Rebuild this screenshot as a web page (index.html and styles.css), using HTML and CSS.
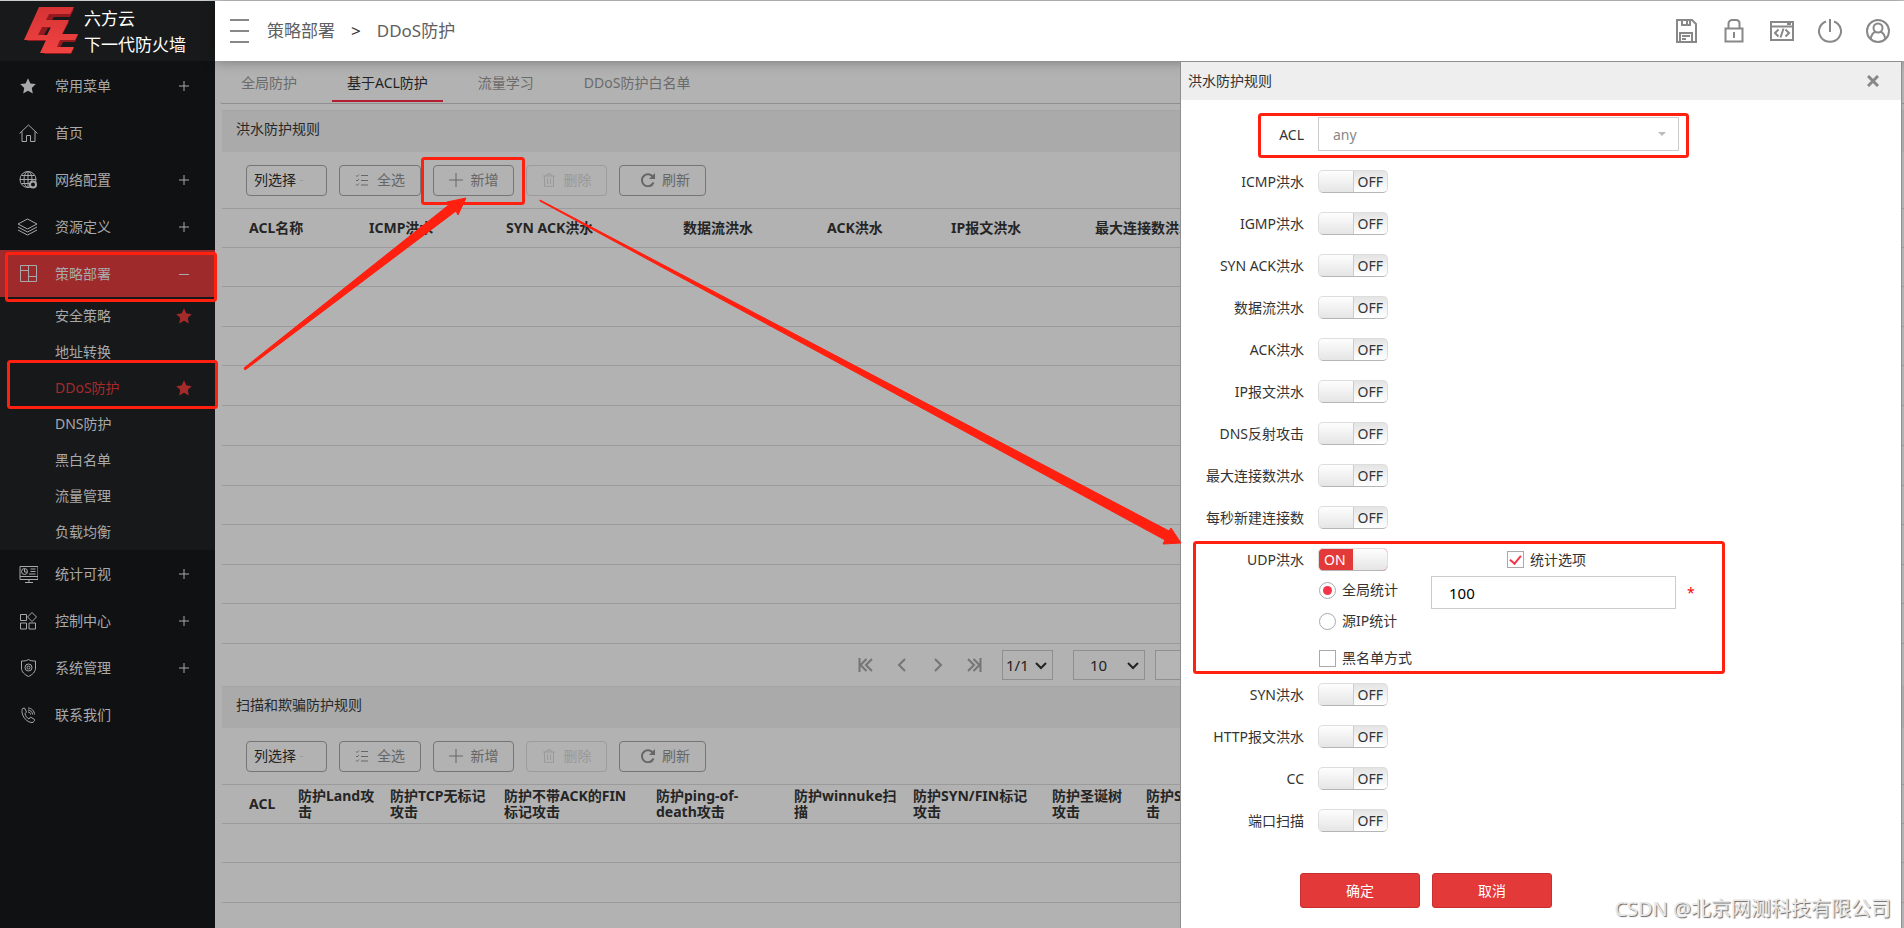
FILE: index.html
```html
<!DOCTYPE html>
<html lang="zh-CN">
<head>
<meta charset="utf-8">
<title>六方云 下一代防火墙</title>
<link rel="stylesheet" href="styles.css">
</head>
<body>
<svg class="defs" aria-hidden="true">
  <defs>
    <linearGradient id="logoRed" x1="0" y1="0" x2="0" y2="1"><stop offset="0" stop-color="#d63335"/><stop offset="1" stop-color="#f04341"/></linearGradient>
    <symbol id="i-star" viewBox="0 0 20 20"><path fill="currentColor" stroke="none" d="M10 2.2l2.4 5.2 5.4.7-4 3.9 1 5.6-4.8-2.8-4.8 2.8 1-5.6-4-3.9 5.4-.7z"/></symbol>
    <symbol id="i-plus" viewBox="0 0 10 10"><path d="M5 0v10M0 5h10"/></symbol>
    <symbol id="i-minus" viewBox="0 0 10 10"><path d="M0 5.500h10"/></symbol>
    <symbol id="i-check-list" viewBox="0 0 14 14"><path d="M1 2.500l1 1 2-2M6 2.500h7M1 7l1 1 2-2M6 7.500h7M1 11.500l1 1 2-2M6 12h7"/></symbol>
    <symbol id="i-add" viewBox="0 0 14 14"><path d="M7 0v14M0 7h14"/></symbol>
    <symbol id="i-trash" viewBox="0 0 14 14"><path d="M1 3h12M5 3V1h4v2M2.500 3v10.300h9V3M5.500 5.500v5.500M8.500 5.500v5.500"/></symbol>
    <symbol id="i-refresh" viewBox="0 0 14 14"><path stroke-width="2" d="M12.500 9.500a6 6 0 1 1-.5-5.500"/><path fill="currentColor" stroke="none" d="M14 0v6H8z"/></symbol>
  </defs>
</svg>

<div class="app">
  <aside class="sidebar">
    <div class="brand">
      <svg class="brand-logo" viewBox="0 0 56 48">
        <path fill="#951a20" fill-rule="evenodd" transform="translate(3 1)" d="M16 1h32l-4 8H28l-3 5h18l-7 13h16l-3 7H37l-3 6h14l-3 6H18l6-13H1zM22 20h7l-4 7h-7z"/>
        <path fill="url(#logoRed)" fill-rule="evenodd" d="M16 0h35l-4 7H26l-3 6h23l-7 14h16l-3 6H37l-3 7h17l-3 6H17l6-13H1zM19 20h9l-4 8h-9z"/>
      </svg>
      <div class="brand-name"><span>六方云</span><span>下一代防火墙</span></div>
    </div>
    <nav class="menu">
      <a class="item" href="#"><svg class="icon"><use href="#i-star"/></svg><span>常用菜单</span><svg class="sign"><use href="#i-plus"/></svg></a>
      <a class="item" href="#"><svg class="icon" viewBox="0 0 20 20"><path d="M1.500 10.500L10.500 2l9 8.500M4 8.500v10h4.500v-6h4v6H17v-10"/></svg><span>首页</span></a>
      <a class="item" href="#"><svg class="icon" viewBox="0 0 20 20"><circle cx="10" cy="9.500" r="8"/><ellipse cx="10" cy="9.500" rx="4" ry="8"/><path d="M10 1.500v16M2 9.500h16M3.500 5.500h13M3.500 13.500h9"/><circle cx="15" cy="14.500" r="3" fill="#101112" stroke-width="2"/></svg><span>网络配置</span><svg class="sign"><use href="#i-plus"/></svg></a>
      <a class="item" href="#"><svg class="icon" viewBox="0 0 20 20"><path d="M9.500 2l9.500 5-9.500 5L0 7zM0 10l9.500 5 9.500-5M0 13l9.500 5 9.500-5"/></svg><span>资源定义</span><svg class="sign"><use href="#i-plus"/></svg></a>
      <a class="item item-active" href="#"><svg class="icon" viewBox="0 0 20 20"><path d="M2.500 1.500h16v16h-16zM10.500 1.500v16M2.500 6.500h8M10.500 12.500h8"/></svg><span>策略部署</span><svg class="sign"><use href="#i-minus"/></svg></a>
      <div class="submenu">
        <a class="sub" href="#"><span>安全策略</span><svg class="fav"><use href="#i-star"/></svg></a>
        <a class="sub" href="#"><span>地址转换</span></a>
        <a class="sub sub-active" href="#"><span>DDoS防护</span><svg class="fav"><use href="#i-star"/></svg></a>
        <a class="sub" href="#"><span>DNS防护</span></a>
        <a class="sub" href="#"><span>黑白名单</span></a>
        <a class="sub" href="#"><span>流量管理</span></a>
        <a class="sub" href="#"><span>负载均衡</span></a>
      </div>
      <a class="item" href="#"><svg class="icon" viewBox="0 0 20 20"><path d="M2 2.500h18v13H2zM2 12.500h18M7 18.500h8M11 15.500v3M12.500 5h5M12.500 7.500h5M11 10h6.500"/><circle cx="6.500" cy="7.500" r="3"/><path d="M6.500 5v3H9"/></svg><span>统计可视</span><svg class="sign"><use href="#i-plus"/></svg></a>
      <a class="item" href="#"><svg class="icon" viewBox="0 0 20 20"><path d="M2.500 3.500h6v6h-6zM2.500 12h6v6h-6zM11 12h6.500v6H11zM14 1.500l4.500 4.500-4.500 4.500L9.500 6z"/></svg><span>控制中心</span><svg class="sign"><use href="#i-plus"/></svg></a>
      <a class="item" href="#"><svg class="icon" viewBox="0 0 20 20"><path d="M10.500 1.500c2 1.500 4.500 1.500 7 1.500v7c0 4-3 6.500-7 8.500-4-2-7-4.500-7-8.500V3c2.500 0 5 0 7-1.500z"/><circle cx="10.500" cy="9.500" r="3.500"/><circle cx="10.500" cy="9.500" r="1.500"/></svg><span>系统管理</span><svg class="sign"><use href="#i-plus"/></svg></a>
      <a class="item" href="#"><svg class="icon" viewBox="0 0 20 20"><path d="M4.500 3.500l2-.5 2 4-1.500 1.500c.5 2.500 2 4.500 4 5.500L12.500 12l4 2.500c.5 1-1 3-2.500 3-5 0-10-6-10-11 0-1.500 0-2.500.5-3zM10 7c1.500 0 2.500 1 2.500 2.500M10 5c2.500 0 4.500 2 4.500 4.500M10 3c3.500 0 6.500 3 6.500 6.500"/></svg><span>联系我们</span></a>
    </nav>
  </aside>

  <div class="page">
    <header class="topbar">
      <button class="burger" type="button" aria-label="菜单"><i></i><i></i><i></i></button>
      <div class="crumbs"><span>策略部署</span><b>&gt;</b><span>DDoS防护</span></div>
      <div class="tools">
        <button type="button" aria-label="保存"><svg viewBox="0 0 24 24"><path d="M3 1h15l4 4v18H3zM8 1v5h8V1M13 2v3M6 23v-9h12v9M8 17h8M8 20h4"/></svg></button>
        <button type="button" aria-label="锁定"><svg viewBox="0 0 24 24"><path d="M3.500 9.500h17v13h-17zM6.500 9.500V4.500c0-2 2-3.500 3.500-3.500h4c2 0 3.500 1.500 3.500 3.500v5M12 13v6"/></svg></button>
        <button type="button" aria-label="控制台"><svg viewBox="0 0 24 24"><path d="M1 3h22v18H1zM1 7.500h22M17 5h4M8.500 10.500L5 14l3.500 3.500M15.500 10.500L19 14l-3.500 3.500M13.500 9.500l-3 9"/></svg></button>
        <button type="button" aria-label="退出"><svg viewBox="0 0 24 24"><path d="M8 2.500a11 10.500 0 1 0 8 0M12 0v13"/></svg></button>
        <button type="button" aria-label="用户"><svg viewBox="0 0 24 24"><circle cx="12" cy="12" r="11"/><circle cx="12" cy="9" r="4.500"/><path d="M5 20c0-4 2.500-7 5-7.500M19 20c0-4-2.500-7-5-7.500"/></svg></button>
      </div>
    </header>

    <main class="content">
      <nav class="tabs">
        <a href="#">全局防护</a>
        <a class="current" href="#">基于ACL防护</a>
        <a href="#">流量学习</a>
        <a href="#">DDoS防护白名单</a>
      </nav>

      <section class="panel">
        <h2>洪水防护规则</h2>
        <div class="toolbar">
          <button class="columns" type="button">列选择<i></i></button>
          <button type="button"><svg><use href="#i-check-list"/></svg>全选</button>
          <button type="button"><svg><use href="#i-add"/></svg>新增</button>
          <button type="button" disabled><svg><use href="#i-trash"/></svg>删除</button>
          <button class="refresh" type="button"><svg><use href="#i-refresh"/></svg>刷新</button>
        </div>
        <table class="flood">
          <colgroup><col><col><col><col><col><col><col></colgroup>
          <thead><tr><th>ACL名称</th><th>ICMP洪水</th><th>SYN ACK洪水</th><th>数据流洪水</th><th>ACK洪水</th><th>IP报文洪水</th><th>最大连接数洪水</th></tr></thead>
          <tbody>
            <tr><td colspan="7"></td></tr><tr><td colspan="7"></td></tr><tr><td colspan="7"></td></tr><tr><td colspan="7"></td></tr><tr><td colspan="7"></td></tr>
            <tr><td colspan="7"></td></tr><tr><td colspan="7"></td></tr><tr><td colspan="7"></td></tr><tr><td colspan="7"></td></tr><tr><td colspan="7"></td></tr>
          </tbody>
        </table>
        <div class="pager">
          <button type="button" aria-label="首页"><svg viewBox="0 0 16 14"><path d="M1.500 0v14M8.500 1l-6 6 6 6M14 1L8 7l6 6"/></svg></button>
          <button type="button" aria-label="上一页"><svg viewBox="0 0 16 14"><path d="M11 1L5 7l6 6"/></svg></button>
          <button type="button" aria-label="下一页"><svg viewBox="0 0 16 14"><path d="M5 1l6 6-6 6"/></svg></button>
          <button type="button" aria-label="末页"><svg viewBox="0 0 16 14"><path d="M14.500 0v14M7.500 1l6 6-6 6M2 1l6 6-6 6"/></svg></button>
          <span class="pick pick-page"><select aria-label="页码"><option>1/1</option></select><svg viewBox="0 0 12 8"><path d="M1 1l5 5 5-5"/></svg></span>
          <span class="pick pick-size"><select aria-label="每页条数"><option>10</option></select><svg viewBox="0 0 12 8"><path d="M1 1l5 5 5-5"/></svg></span>
          <input type="text" aria-label="跳转">
        </div>
      </section>

      <section class="panel">
        <h2>扫描和欺骗防护规则</h2>
        <div class="toolbar">
          <button class="columns" type="button">列选择<i></i></button>
          <button type="button"><svg><use href="#i-check-list"/></svg>全选</button>
          <button type="button"><svg><use href="#i-add"/></svg>新增</button>
          <button type="button" disabled><svg><use href="#i-trash"/></svg>删除</button>
          <button class="refresh" type="button"><svg><use href="#i-refresh"/></svg>刷新</button>
        </div>
        <table class="scan">
          <colgroup><col><col><col><col><col><col><col><col><col></colgroup>
          <thead><tr><th>ACL</th><th>防护Land攻<br>击</th><th>防护TCP无标记<br>攻击</th><th>防护不带ACK的FIN<br>标记攻击</th><th>防护ping-of-<br>death攻击</th><th>防护winnuke扫<br>描</th><th>防护SYN/FIN标记<br>攻击</th><th>防护圣诞树<br>攻击</th><th>防护Smurf攻<br>击</th></tr></thead>
          <tbody><tr><td colspan="9"></td></tr><tr><td colspan="9"></td></tr><tr><td colspan="9"></td></tr></tbody>
        </table>
      </section>
    </main>
  </div>
</div>

<aside class="drawer">
  <header><h2>洪水防护规则</h2><button type="button" aria-label="关闭"><svg viewBox="0 0 12 12"><path d="M1 1l10 10M11 1L1 11"/></svg></button></header>
  <form>
    <div class="row"><label for="acl">ACL</label><span class="combo"><select id="acl"><option>any</option></select></span></div>
    <div class="row"><label for="f1">ICMP洪水</label><span class="switch"><input id="f1" type="checkbox"><span>OFF</span></span></div>
    <div class="row"><label for="f2">IGMP洪水</label><span class="switch"><input id="f2" type="checkbox"><span>OFF</span></span></div>
    <div class="row"><label for="f3">SYN ACK洪水</label><span class="switch"><input id="f3" type="checkbox"><span>OFF</span></span></div>
    <div class="row"><label for="f4">数据流洪水</label><span class="switch"><input id="f4" type="checkbox"><span>OFF</span></span></div>
    <div class="row"><label for="f5">ACK洪水</label><span class="switch"><input id="f5" type="checkbox"><span>OFF</span></span></div>
    <div class="row"><label for="f6">IP报文洪水</label><span class="switch"><input id="f6" type="checkbox"><span>OFF</span></span></div>
    <div class="row"><label for="f7">DNS反射攻击</label><span class="switch"><input id="f7" type="checkbox"><span>OFF</span></span></div>
    <div class="row"><label for="f8">最大连接数洪水</label><span class="switch"><input id="f8" type="checkbox"><span>OFF</span></span></div>
    <div class="row"><label for="f9">每秒新建连接数</label><span class="switch"><input id="f9" type="checkbox"><span>OFF</span></span></div>
    <div class="row"><label for="f10">UDP洪水</label><span class="switch switch-on"><input id="f10" type="checkbox" checked><span>ON</span></span><label class="option stats"><input type="checkbox" checked>统计选项</label></div>
    <div class="suboptions">
      <label class="option ruled"><input type="radio" name="scope" checked>全局统计</label>
      <div class="limit"><input type="text" value="100" aria-label="全局统计阈值"><em>*</em></div>
      <label class="option"><input type="radio" name="scope">源IP统计</label>
      <label class="option blacklist"><input type="checkbox">黑名单方式</label>
    </div>
    <div class="row"><label for="f11">SYN洪水</label><span class="switch"><input id="f11" type="checkbox"><span>OFF</span></span></div>
    <div class="row"><label for="f12">HTTP报文洪水</label><span class="switch"><input id="f12" type="checkbox"><span>OFF</span></span></div>
    <div class="row"><label for="f13">CC</label><span class="switch"><input id="f13" type="checkbox"><span>OFF</span></span></div>
    <div class="row"><label for="f14">端口扫描</label><span class="switch"><input id="f14" type="checkbox"><span>OFF</span></span></div>
    <div class="actions"><button type="button">确定</button><button type="button">取消</button></div>
  </form>
</aside>

<svg class="marks" aria-hidden="true">
  <g class="frames">
    <rect x="6.500" y="253.500" width="209" height="47" rx="2"/>
    <rect x="8.500" y="361.500" width="208" height="46" rx="2"/>
    <rect x="422.500" y="158.500" width="101" height="45" rx="2"/>
    <rect x="1259.500" y="114.500" width="428" height="42" rx="2"/>
    <rect x="1194.500" y="542.500" width="529" height="130" rx="2"/>
  </g>
  <path class="arrow" d="M244 368L450 204l-3-2 19-4-8 17-2-4L245 370z"/>
  <path class="arrow" d="M540 200L1169 531l2-3 10 15-18 1 2-4L540 201z"/>
</svg>
<div class="credit">CSDN @北京网测科技有限公司</div>
</body>
</html>
```

FILE: styles.css
```css
* { box-sizing: border-box; }
body {
  margin: 0;
  height: 100vh;
  overflow: hidden;
  position: relative;
  font: 14px/20px "Noto Sans", "Noto Sans CJK SC", sans-serif;
  color: #333;
  background: #b2b2b2;
}
a { color: inherit; text-decoration: none; }
button, input, select { font: inherit; color: inherit; margin: 0; }
button { padding: 0; border: 0; background: none; }
h2 { margin: 0; font-size: 14px; font-weight: 400; }
svg { display: block; fill: none; stroke: currentColor; }
.defs { position: absolute; width: 0; height: 0; }

.app { display: flex; height: 100%; border-top: 1px solid #ccc; }

/* sidebar */
.sidebar { flex: none; width: 215px; background: #101112; color: #a8a9aa; }
.brand { display: flex; gap: 5px; height: 60px; padding: 5px 0 0 23px; background: #18191a; }
.brand-logo { width: 56px; height: 48px; margin-top: 1px; stroke: none; }
.brand-name { display: flex; flex-direction: column; color: #fff; font-size: 17px; line-height: 26px; }
.menu { padding-top: 1px; }
.item { display: flex; align-items: center; gap: 17px; height: 47px; padding: 0 26px 0 18px; }
.item span, .sub span { flex: 1; }
.icon { width: 20px; height: 20px; }
.sign { width: 10px; height: 10px; }
.item-active { background: #9e2a2b; }
.submenu { background: #17181a; padding-top: 1px; }
.sub { display: flex; align-items: center; height: 36px; padding: 0 21px 0 55px; }
.sub-active { color: #a52a2c; }
.fav { width: 20px; height: 20px; color: #a52a2c; }

/* top bar */
.page { flex: 1; min-width: 0; display: flex; flex-direction: column; }
.topbar { position: relative; flex: none; display: flex; align-items: center; height: 60px; padding: 0 14px 0 15px; background: #fff; box-shadow: 0 0 12px rgba(0, 0, 0, .35); }
.burger { display: flex; flex-direction: column; gap: 9px; width: 19px; }
.burger i { height: 2px; background: #888; }
.crumbs { display: flex; gap: 16px; margin-left: 18px; font-size: 17px; color: #606060; }
.crumbs b { font-weight: 400; color: #333; }
.tools { display: flex; gap: 24px; margin-left: auto; color: #888; }
.tools svg { width: 24px; height: 24px; stroke-width: 2; }

/* content */
.content { flex: 1; min-height: 0; overflow: hidden; padding-left: 4px; }
.tabs { display: flex; gap: 20px; height: 43px; padding-left: 6px; border-bottom: 1px solid #8f8f8f; border-left: 1px solid #b2b2b2; border-bottom-left-radius: 4px; color: #6b6b6b; }
.tabs a { height: 41px; padding: 12px 15px 0; line-height: 20px; }
.tabs .current { border-bottom: 2px solid #b01e30; color: #222; }
.panel { margin-left: 3px; }
.panel h2 { height: 42px; margin-top: 6px; padding: 8px 14px; border-top: 1px solid #a5a5a5; background: #aaa; color: #282828; }
.panel + .panel h2 { margin-top: 0; }
.toolbar { display: flex; align-items: center; gap: 12px; height: 56px; padding-left: 24px; }
.toolbar button { display: flex; align-items: center; justify-content: center; gap: 8px; width: 81px; height: 31px; border: 1px solid #757575; border-radius: 4px; color: #666; }
.toolbar button:nth-child(2) { width: 82px; }
.toolbar svg { width: 14px; height: 14px; }
.toolbar .columns { justify-content: flex-start; padding-left: 7px; gap: 4px; color: #222; }
.columns i { width: 3px; height: 1px; background: #999; }
.toolbar .refresh { width: 87px; padding-left: 6px; gap: 7px; }
.toolbar button:disabled { border-color: #9c9c9c; color: #999; }
table { width: 100%; border-collapse: collapse; table-layout: fixed; color: #252525; }
th { height: 39px; padding: 0; border-top: 1px solid #9b9b9b; border-bottom: 1px solid #9b9b9b; text-align: left; line-height: 16px; white-space: nowrap; }
td { height: 39px; padding: 0; border-bottom: 1px solid #9b9b9b; }
tr:nth-child(even) td, tr:nth-child(5n) td { height: 40px; }
th:first-child { padding-left: 27px; }
.flood col:nth-child(1) { width: 147px; }
.flood col:nth-child(2) { width: 137px; }
.flood col:nth-child(3) { width: 177px; }
.flood col:nth-child(4) { width: 144px; }
.flood col:nth-child(5) { width: 124px; }
.flood col:nth-child(6) { width: 144px; }
.scan col:nth-child(1) { width: 76px; }
.scan col:nth-child(2) { width: 92px; }
.scan col:nth-child(3) { width: 114px; }
.scan col:nth-child(4) { width: 152px; }
.scan col:nth-child(5) { width: 138px; }
.scan col:nth-child(6) { width: 119px; }
.scan col:nth-child(7) { width: 139px; }
.scan col:nth-child(8) { width: 94px; }
.pager { display: flex; align-items: center; height: 42px; padding-left: 636px; color: #757575; }
.pager button { margin-right: 20px; }
.pager button svg { width: 16px; height: 14px; stroke-width: 2; }
.pager input, .pick select { height: 30px; border: 1px solid #8f8f8f; border-radius: 0; background: none; }
.pager input { width: 60px; margin-left: 10px; background: #b5b5b5; }
.pick { position: relative; color: #222; font-size: 15px; }
.pick select { appearance: none; width: 100%; padding: 0 0 0 3px; }
.pick svg { position: absolute; right: 6px; top: 12px; width: 12px; height: 8px; stroke-width: 2; pointer-events: none; }
.pick-page { width: 51px; }
.pick-size { width: 72px; margin-left: 20px; }
.pick-size select { padding-left: 16px; }

/* drawer */
.drawer { position: absolute; top: 61px; right: 2px; bottom: 0; width: 722px; border: 1px solid #8f8f8f; border-bottom: 0; background: #fff; }
.drawer header { display: flex; align-items: center; justify-content: space-between; height: 38px; padding: 0 22px 0 7px; background: #eee; }
.drawer header svg { width: 12px; height: 12px; color: #888; stroke-width: 3; }
.drawer form { padding-top: 17px; }
.row { display: grid; grid-template-columns: 123px 70px auto; gap: 14px; align-items: center; margin-bottom: 19px; }
.row > label:first-child { text-align: right; line-height: 23px; white-space: nowrap; }
.combo { position: relative; grid-column: 2 / 4; width: 361px; }
.combo select { display: block; appearance: none; width: 100%; height: 34px; padding: 2px 14px 0; border: 1px solid #ccc; border-radius: 0; background: #fff; color: #888; }
.combo::after { content: ""; position: absolute; right: 13px; top: 15px; border: 4px solid transparent; border-top-color: #bbb; }
.switch { position: relative; display: block; height: 23px; border: 1px solid #ddd; border-bottom: 1px solid #b5b5b5; border-radius: 5px; background: linear-gradient(#e4e4e4, #fff); overflow: hidden; }
.switch input { position: absolute; inset: 0; width: 100%; height: 100%; appearance: none; }
.switch input::before { content: ""; position: absolute; left: 0; top: 0; width: 34px; height: 21px; border-right: 1px solid #ccc; background: linear-gradient(#fefefe, #e5e5e5); }
.switch span { display: block; padding: 1px 4px 0; text-align: right; pointer-events: none; }
.switch-on { background: #e33938; }
.switch-on input::before { left: 34px; border-right: 0; }
.switch-on span { text-align: left; color: #fff; padding-left: 5px; position: relative; }
.option { display: flex; align-items: center; gap: 6px; height: 24px; white-space: nowrap; }
.option input { appearance: none; display: grid; place-items: center; flex: none; width: 17px; height: 17px; border: 1px solid #aaa; background: #fff; }
.option input[type="checkbox"]:checked::after { content: ""; width: 5px; height: 9px; margin-bottom: 3px; border: solid #f5344a; border-width: 0 2px 2px 0; rotate: 40deg; }
.option input[type="radio"] { border-radius: 50%; }
.option input[type="radio"]:checked::after { content: ""; width: 9px; height: 9px; border-radius: 50%; background: #f5344a; }
.stats { margin-left: 105px; height: 23px; }
.suboptions { display: grid; grid-template-columns: 112px auto; grid-template-rows: 33px 24px 41px; margin: -14px 0 9px 138px; }
.suboptions .option { grid-column: 1; }
.ruled { height: 28px; }
.blacklist { align-self: center; padding-top: 9px; height: 33px; }
.limit { display: flex; gap: 11px; grid-column: 2; }
.limit input { width: 245px; height: 33px; padding: 0 17px; border: 1px solid #ccc; font-size: 15px; color: #000; }
.limit em { color: #f00; font-style: normal; line-height: 33px; }
.actions { display: flex; gap: 12px; padding: 22px 0 0 119px; }
.actions button { width: 120px; height: 35px; border: 1px solid #c62f2f; border-radius: 3px; background: #e33938; color: #fff; }

/* annotations */
.marks { position: absolute; inset: 0; width: 100%; height: 100%; pointer-events: none; }
.frames { stroke: #ff2010; stroke-width: 3; }
.arrow { fill: #ff2010; stroke: #ff2010; stroke-width: 1; }
.credit { position: absolute; right: 13px; bottom: 6px; color: #e8e8e8; font-size: 20px; line-height: 26px; text-shadow: 1px 1px 1px #666; pointer-events: none; }
```
